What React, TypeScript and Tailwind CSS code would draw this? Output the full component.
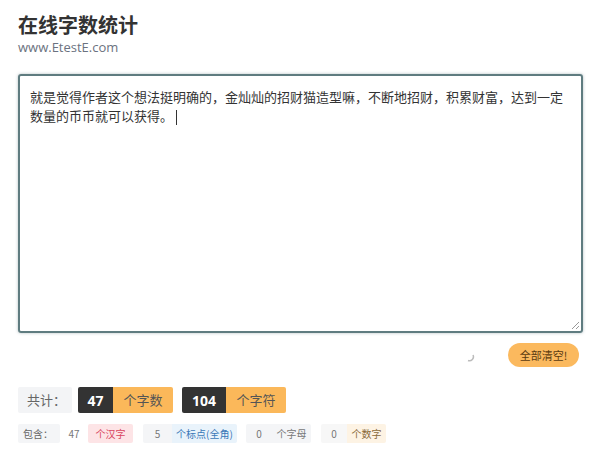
import React from "react";

const F = { fontFamily: '"Noto Sans CJK SC", "Noto Sans", sans-serif' };

export default function App() {
  return (
    <div className="w-[600px] h-[452px] bg-white text-[#333] px-[18px] pt-[12px] overflow-hidden" style={F}>
      <div className="text-[20px] font-bold leading-[26px] text-[#333]">在线字数统计</div>
      <div className="text-[13px] leading-[16px] text-[#6b7280] mt-[1px]" style={{ fontFamily: '"Open Sans", "Noto Sans", sans-serif' }}>www.EtestE.com</div>

      <div className="relative mt-[19px] w-[565px] h-[259px] border-2 border-[#5f7c80] rounded-[3px] shadow-[0_0_3px_rgba(95,124,128,0.5)] px-[10px] pt-[11px] text-[13px] leading-[19px] text-[#333]">
        就是觉得作者这个想法挺明确的，金灿灿的招财猫造型嘛，不断地招财，积累财富，达到一定数量的币币就可以获得。
        <span className="inline-block w-px h-[15px] bg-[#333] align-middle ml-[3px]"></span>
        <svg className="absolute right-[1px] bottom-[1px]" width="10" height="10" viewBox="0 0 10 10">
          <line x1="9" y1="2" x2="2" y2="9" stroke="#999" strokeWidth="1" />
          <line x1="9" y1="6" x2="6" y2="9" stroke="#999" strokeWidth="1" />
        </svg>
      </div>

      <div className="flex items-center justify-end mt-[10px] h-[24px] pr-[3px]">
        <svg width="10" height="10" viewBox="0 0 10 10" className="mr-[33px] mt-[3px]">
          <path d="M8 3 A4 4 0 0 1 3 8.5" fill="none" stroke="#bbb" strokeWidth="1.5" />
        </svg>
        <button className="h-[24px] w-[71px] rounded-full bg-[#fbb95e] text-[11px] text-[#5a3b10] flex items-center justify-center">全部清空!</button>
      </div>

      <div className="flex items-center mt-[20px] h-[26px] text-[13px]">
        <div className="h-full w-[54px] bg-[#f3f4f6] text-[#666] flex items-center pl-[9px] rounded-[2px]">共计：</div>
        <div className="h-full w-[35px] ml-[6px] bg-[#333] text-white font-bold text-[14px] flex items-center justify-center rounded-l-[2px]" style={{ fontFamily: '"Open Sans", sans-serif' }}>47</div>
        <div className="h-full w-[60px] bg-[#fbb85a] text-[#555] flex items-center justify-center rounded-r-[2px]">个字数</div>
        <div className="h-full w-[44px] ml-[9px] bg-[#333] text-white font-bold text-[14px] flex items-center justify-center rounded-l-[2px]" style={{ fontFamily: '"Open Sans", sans-serif' }}>104</div>
        <div className="h-full w-[60px] bg-[#fbb85a] text-[#555] flex items-center justify-center rounded-r-[2px]">个字符</div>
      </div>

      <div className="flex items-center mt-[11px] h-[19px] text-[10px]">
        <div className="h-full w-[42px] bg-[#f4f5f7] text-[#666] flex items-center pl-[5px] rounded-[2px]">包含：</div>
        <div className="h-full w-[28px] text-[#777] flex items-center justify-center">47</div>
        <div className="h-full w-[45px] bg-[#fde4e6] text-[#d9455f] flex items-center justify-center rounded-[2px]">个汉字</div>
        <div className="h-full w-[29px] ml-[10px] bg-[#f4f5f7] text-[#777] flex items-center justify-center rounded-l-[2px]">5</div>
        <div className="h-full w-[65px] bg-[#e9f3fb] text-[#3b78b8] flex items-center justify-center rounded-r-[2px]">个标点(全角)</div>
        <div className="h-full w-[26px] ml-[9px] bg-[#f4f5f7] text-[#777] flex items-center justify-center rounded-l-[2px]">0</div>
        <div className="h-full w-[39px] bg-[#f4f5f7] text-[#777] flex items-center justify-center rounded-r-[2px]">个字母</div>
        <div className="h-full w-[26px] ml-[10px] bg-[#f7f7f7] text-[#777] flex items-center justify-center rounded-l-[2px]">0</div>
        <div className="h-full w-[39px] bg-[#fdf3e4] text-[#8a6a3a] flex items-center justify-center rounded-r-[2px]">个数字</div>
      </div>
    </div>
  );
}
